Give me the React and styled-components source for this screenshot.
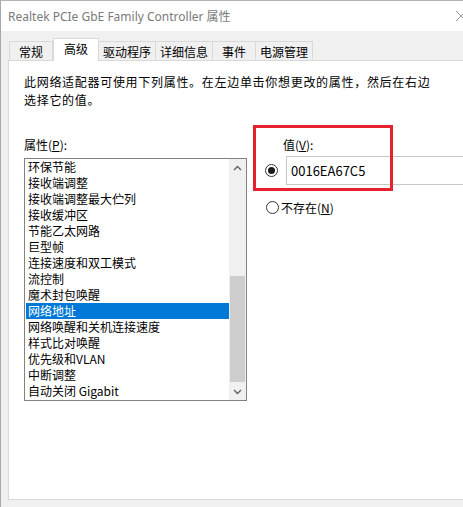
import React from "react";
import styled, { createGlobalStyle } from "styled-components";

const GlobalStyle = createGlobalStyle`
  html, body {
    margin: 0;
    padding: 0;
    background: #ffffff;
  }
  body {
    font-family: "Noto Sans CJK SC", "Noto Sans", sans-serif;
    font-size: 12px;
    color: #000;
  }
`;

const FONT = `"Noto Sans CJK SC", "Noto Sans", sans-serif`;

const Window = styled.div`
  width: 463px;
  height: 507px;
  box-sizing: border-box;
  border-left: 1px solid #a9a9a9;
  border-top: 1px solid #b4b4b4;
  background: #f0f0f0;
  overflow: hidden;
  display: flex;
  flex-direction: column;
`;

const TitleBar = styled.div`
  height: 30px;
  flex: none;
  background: #fff;
  display: flex;
  align-items: center;
  justify-content: space-between;
  padding-left: 7px;
  font-family: "Noto Sans", ${FONT};
  font-size: 12px;
  color: #7a7a7a;
`;

const CloseGlyph = styled.svg`
  width: 10px;
  height: 10px;
  margin-right: -3px;
`;

const Body = styled.div`
  flex: 1;
  display: flex;
  flex-direction: column;
  padding: 7px 0 7px 7px;
`;

const TabRow = styled.div`
  display: flex;
  align-items: flex-end;
  height: 23px;
  padding-left: 1px;
  position: relative;
  z-index: 1;
  margin-bottom: -1px;
`;

const Tab = styled.div`
  box-sizing: border-box;
  height: ${(p) => (p.$active ? "23px" : "20px")};
  padding: 0 ${(p) => p.$pad}px;
  background: ${(p) => (p.$active ? "#fff" : "#f0f0f0")};
  border: 1px solid #d9d9d9;
  border-left-width: ${(p) => (p.$first || p.$active ? "1px" : "0")};
  border-bottom: ${(p) => (p.$active ? "none" : "1px solid #d9d9d9")};
  display: flex;
  align-items: center;
  font-family: ${FONT};
  font-size: 12px;
  position: relative;
  z-index: ${(p) => (p.$active ? 2 : 1)};
  padding-bottom: ${(p) => (p.$active ? "3px" : "0")};
`;

const Panel = styled.div`
  flex: 1;
  background: #fff;
  border: 1px solid #d9d9d9;
  border-right: none;
  padding: 12px 0 0 15px;
  display: flex;
  flex-direction: column;
`;

const Description = styled.p`
  margin: 0;
  line-height: 18px;
  font-family: ${FONT};
  font-size: 12px;
  letter-spacing: 0.7px;
`;

const Columns = styled.div`
  display: flex;
  margin-top: 27px;
  gap: 18px;
`;

const LeftColumn = styled.div`
  display: flex;
  flex-direction: column;
  width: 223px;
  flex: none;
`;

const Label = styled.div`
  line-height: 18px;
  height: 18px;
  font-family: ${FONT};
  font-size: 12px;
  padding-left: ${(p) => p.$indent || 0}px;
`;

const ListBox = styled.div`
  margin-top: 4px;
  box-sizing: border-box;
  height: 243px;
  border: 1px solid #828282;
  display: flex;
  background: #fff;
`;

const Items = styled.div`
  flex: 1;
  display: flex;
  flex-direction: column;
  padding-left: 1px;
`;

const Item = styled.div`
  height: 16px;
  line-height: 16px;
  padding-left: 2px;
  font-family: ${FONT};
  font-size: 12px;
  white-space: nowrap;
  background: ${(p) => (p.$selected ? "#0078d7" : "transparent")};
  color: ${(p) => (p.$selected ? "#fff" : "#000")};
`;

const ScrollBar = styled.div`
  width: 17px;
  flex: none;
  background: #f0f0f0;
  display: flex;
  flex-direction: column;
`;

const ScrollArrow = styled.div`
  height: 17px;
  flex: none;
  display: flex;
  align-items: center;
  justify-content: center;
`;

const ScrollTrack = styled.div`
  flex: 1;
  display: flex;
  flex-direction: column;
`;

const Thumb = styled.div`
  width: 15px;
  margin-left: 1px;
  background: #cdcdcd;
`;

const RightColumn = styled.div`
  flex: 1;
  display: flex;
  flex-direction: column;
  position: relative;
`;

const RadioRow = styled.label`
  display: flex;
  align-items: center;
  gap: 2px;
  font-family: ${FONT};
  font-size: 12px;
`;

const Radio = styled.span`
  box-sizing: border-box;
  width: 13px;
  height: 13px;
  flex: none;
  border-radius: 50%;
  border: 1px solid #333;
  background: #fff;
  display: flex;
  align-items: center;
  justify-content: center;
  &::after {
    content: "";
    display: ${(p) => (p.$checked ? "block" : "none")};
    width: 7px;
    height: 7px;
    border-radius: 50%;
    background: #1a1a1a;
  }
`;

const ValueRow = styled.div`
  display: flex;
  align-items: center;
  margin-top: 2px;
  gap: 8px;
`;

const ValueInput = styled.div`
  box-sizing: border-box;
  height: 29px;
  flex: 1;
  margin-right: -40px;
  border: 1px solid #c8c8c8;
  border-right: none;
  display: flex;
  align-items: center;
  padding-left: 4px;
  font-family: ${FONT};
  font-size: 13px;
`;

const AbsentRow = styled(RadioRow)`
  margin-top: 14px;
  padding-left: 1px;
`;

const Highlight = styled.div`
  position: absolute;
  left: -12px;
  top: -11px;
  width: 140px;
  height: 66px;
  box-sizing: border-box;
  border: 3px solid #e5212d;
  pointer-events: none;
`;

const Underlined = styled.span`
  text-decoration: underline;
`;

const tabs = [
  { name: "常规", pad: 9 },
  { name: "高级", pad: 10, active: true },
  { name: "驱动程序", pad: 4 },
  { name: "详细信息", pad: 4 },
  { name: "事件", pad: 9 },
  { name: "电源管理", pad: 4 },
];

const properties = [
  "环保节能",
  "接收端调整",
  "接收端调整最大伫列",
  "接收缓冲区",
  "节能乙太网路",
  "巨型帧",
  "连接速度和双工模式",
  "流控制",
  "魔术封包唤醒",
  "网络地址",
  "网络唤醒和关机连接速度",
  "样式比对唤醒",
  "优先级和VLAN",
  "中断调整",
  "自动关闭 Gigabit",
];

function Chevron({ down }) {
  return (
    <svg width="9" height="6" viewBox="0 0 9 6">
      <path
        d={down ? "M1 1 L4.5 4.5 L8 1" : "M1 5 L4.5 1.5 L8 5"}
        fill="none"
        stroke="#606060"
        strokeWidth="1.3"
      />
    </svg>
  );
}

export default function App() {
  return (
    <>
      <GlobalStyle />
      <Window>
        <TitleBar>
          <span>Realtek PCIe GbE Family Controller 属性</span>
          <CloseGlyph viewBox="0 0 10 10">
            <path d="M0 0 L10 10 M10 0 L0 10" stroke="#9a9a9a" strokeWidth="1" />
          </CloseGlyph>
        </TitleBar>
        <Body>
          <TabRow>
            {tabs.map((t, i) => (
              <Tab key={t.name} $active={t.active} $pad={t.pad} $first={i === 0}>
                {t.name}
              </Tab>
            ))}
          </TabRow>
          <Panel>
            <Description>
              此网络适配器可使用下列属性。在左边单击你想更改的属性，然后在右边
              <br />
              选择它的值。
            </Description>
            <Columns>
              <LeftColumn>
                <Label>
                  属性(<Underlined>P</Underlined>):
                </Label>
                <ListBox>
                  <Items>
                    {properties.map((p) => (
                      <Item key={p} $selected={p === "网络地址"}>
                        {p}
                      </Item>
                    ))}
                  </Items>
                  <ScrollBar>
                    <ScrollArrow>
                      <Chevron />
                    </ScrollArrow>
                    <ScrollTrack>
                      <div style={{ height: 100 }} />
                      <Thumb style={{ height: 106 }} />
                    </ScrollTrack>
                    <ScrollArrow>
                      <Chevron down />
                    </ScrollArrow>
                  </ScrollBar>
                </ListBox>
              </LeftColumn>
              <RightColumn>
                <Label $indent={18}>
                  值(<Underlined>V</Underlined>):
                </Label>
                <ValueRow>
                  <Radio $checked />
                  <ValueInput>0016EA67C5</ValueInput>
                </ValueRow>
                <AbsentRow>
                  <Radio />
                  <span>
                    不存在(<Underlined>N</Underlined>)
                  </span>
                </AbsentRow>
                <Highlight />
              </RightColumn>
            </Columns>
          </Panel>
        </Body>
      </Window>
    </>
  );
}
